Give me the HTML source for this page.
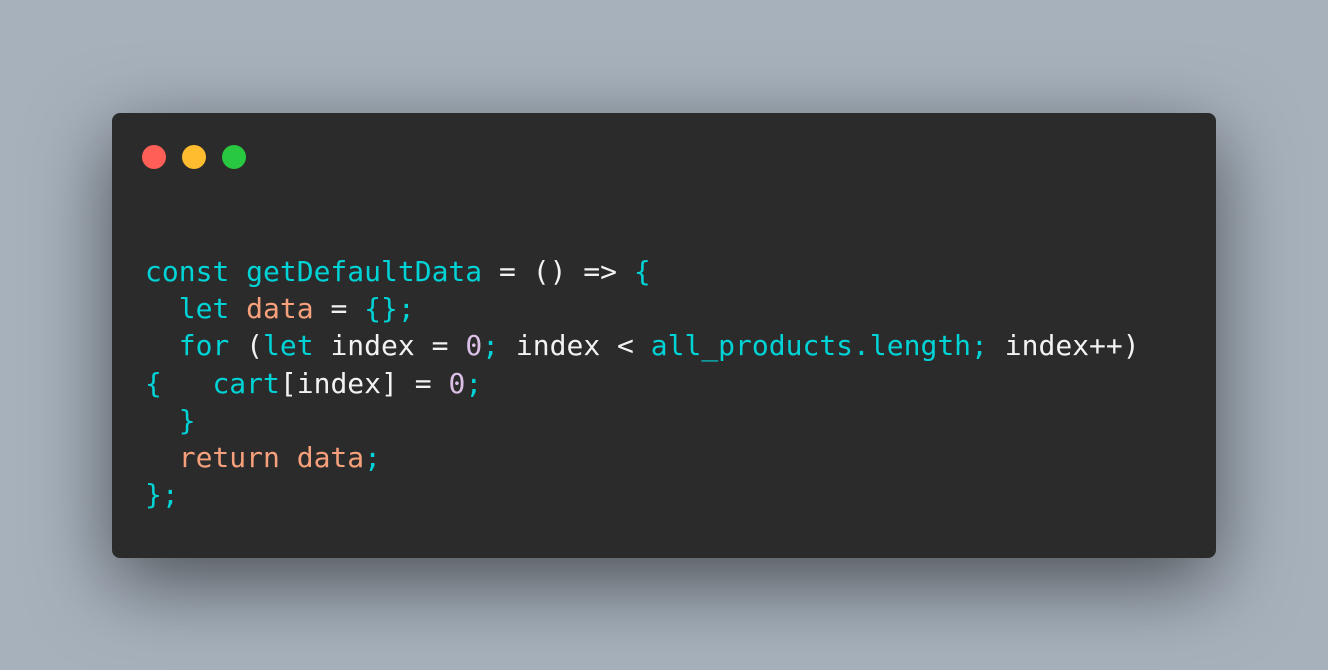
<!DOCTYPE html>
<html><head><style>
html,body{margin:0;padding:0}
body{width:1328px;height:670px;background:#a7b1bc;position:relative;overflow:hidden}
.card{position:absolute;left:112px;top:113px;width:1104px;height:445px;background:#2b2b2b;border-radius:8px;box-shadow:0 24px 80px rgba(0,0,0,0.55)}
.dot{position:absolute;top:145px;width:24px;height:24px;border-radius:50%}
pre{position:absolute;left:145px;top:253px;margin:0;font-family:"DejaVu Sans Mono","Liberation Mono",monospace;font-size:28px;line-height:37.2px;color:#f2f2f2}
.c{color:#00d3d6}.o{color:#f6a07c}.n{color:#dcbfe6}
</style></head><body>
<div class="card"></div>
<div class="dot" style="left:142px;background:#ff5f57"></div>
<div class="dot" style="left:182px;background:#febc2e"></div>
<div class="dot" style="left:222px;background:#28c840"></div>
<pre><span class="c">const getDefaultData</span> = () =&gt; <span class="c">{</span>
  <span class="c">let</span> <span class="o">data</span> = <span class="c">{};</span>
  <span class="c">for</span> (<span class="c">let</span> index = <span class="n">0</span><span class="c">;</span> index &lt; <span class="c">all_products.length;</span> index++)
<span class="c">{</span>   <span class="c">cart</span>[index] = <span class="n">0</span><span class="c">;</span>
  <span class="c">}</span>
  <span class="o">return data</span><span class="c">;</span>
<span class="c">};</span></pre>
</body></html>
